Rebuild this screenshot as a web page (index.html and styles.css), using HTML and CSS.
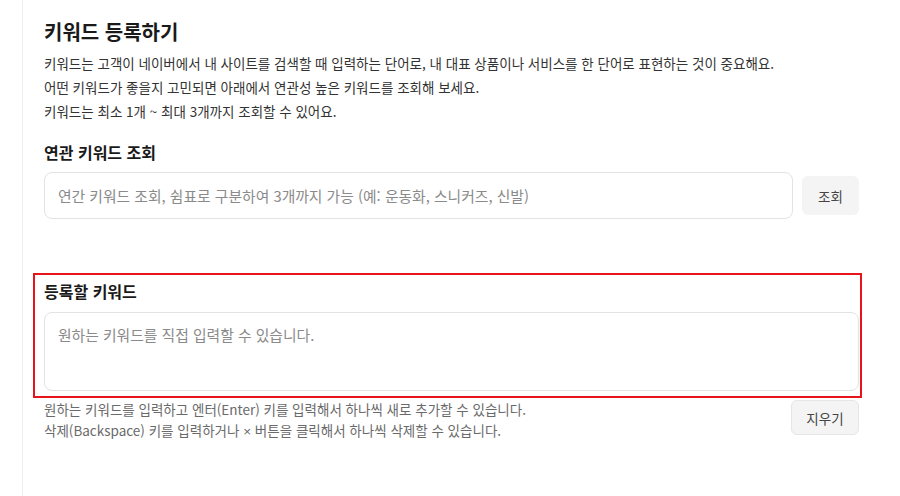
FILE: index.html
```html
<!DOCTYPE html>
<html lang="ko">
<head>
<meta charset="utf-8">
<link rel="stylesheet" href="styles.css">
</head>
<body>
<div class="page">
  <main class="panel">
    <h1 class="title">키워드 등록하기</h1>
    <div class="desc">
      <p>키워드는 고객이 네이버에서 내 사이트를 검색할 때 입력하는 단어로, 내 대표 상품이나 서비스를 한 단어로 표현하는 것이 중요해요.</p>
      <p>어떤 키워드가 좋을지 고민되면 아래에서 연관성 높은 키워드를 조회해 보세요.</p>
      <p>키워드는 최소 1개 ~ 최대 3개까지 조회할 수 있어요.</p>
    </div>

    <section class="lookup">
      <h2 class="subtitle">연관 키워드 조회</h2>
      <div class="lookup-row">
        <div class="input">연간 키워드 조회, 쉼표로 구분하여 3개까지 가능 (예: 운동화, 스니커즈, 신발)</div>
        <button class="btn btn-lookup">조회</button>
      </div>
    </section>

    <section class="register">
      <h2 class="subtitle">등록할 키워드</h2>
      <div class="textarea">원하는 키워드를 직접 입력할 수 있습니다.</div>
    </section>

    <div class="help-row">
      <div class="help">
        <p>원하는 키워드를 입력하고 엔터(Enter) 키를 입력해서 하나씩 새로 추가할 수 있습니다.</p>
        <p>삭제(Backspace) 키를 입력하거나 <span class="times">×</span> 버튼을 클릭해서 하나씩 삭제할 수 있습니다.</p>
      </div>
      <button class="btn btn-clear">지우기</button>
    </div>
  </main>
</div>
</body>
</html>
```

FILE: styles.css
```css
* { box-sizing: border-box; }
html, body { margin: 0; padding: 0; background: #fff; }
body {
  font-family: "Noto Sans CJK KR", "Noto Sans", sans-serif;
  color: #222;
  width: 900px;
  height: 496px;
  overflow: hidden;
}
p, h1, h2 { margin: 0; }

.page {
  padding-left: 22px;
  height: 496px;
}
.panel {
  border-left: 1px solid #efefef;
  height: 100%;
  padding: 18px 41px 0 21px;
}

.title {
  font-size: 20px;
  line-height: 28px;
  font-weight: 700;
  color: #1a1a1a;
}
.desc {
  margin-top: 5px;
  font-size: 13.5px;
  line-height: 24px;
  color: #333;
}

.lookup { margin-top: 17px; }
.subtitle {
  font-size: 16px;
  line-height: 24px;
  font-weight: 700;
  color: #1a1a1a;
}
.lookup-row {
  margin-top: 8px;
  display: flex;
  align-items: center;
  gap: 9px;
}
.input {
  flex: 1;
  height: 47px;
  border: 1px solid #e3e3e3;
  border-radius: 8px;
  padding: 0 13px;
  display: flex;
  align-items: center;
  font-size: 14.8px;
  color: #8a8a8a;
}
.btn {
  font-family: inherit;
  font-size: 13.5px;
  color: #444;
  background: #f4f4f4;
  border-radius: 6px;
  cursor: pointer;
}
.btn-lookup {
  width: 57px;
  height: 39px;
  border: none;
}

.register {
  margin: 54px -3px 0 -11px;
  border: 2px solid #e8141b;
  padding: 4px 1px 5px 9px;
}
.textarea {
  margin-top: 9px;
  height: 79px;
  border: 1px solid #e3e3e3;
  border-radius: 8px;
  padding: 10px 13px;
  font-size: 14.8px;
  line-height: 24px;
  color: #8a8a8a;
}

.help-row {
  display: flex;
  justify-content: space-between;
  align-items: flex-start;
}
.help {
  padding-top: 1px;
  font-size: 13.5px;
  line-height: 21px;
  color: #6a6a6a;
}
.times {
  font-family: "Liberation Sans", Arial, sans-serif;
}
.btn-clear {
  margin-top: 2px;
  width: 68px;
  height: 35px;
  border: 1px solid #e6e6e6;
}
```
